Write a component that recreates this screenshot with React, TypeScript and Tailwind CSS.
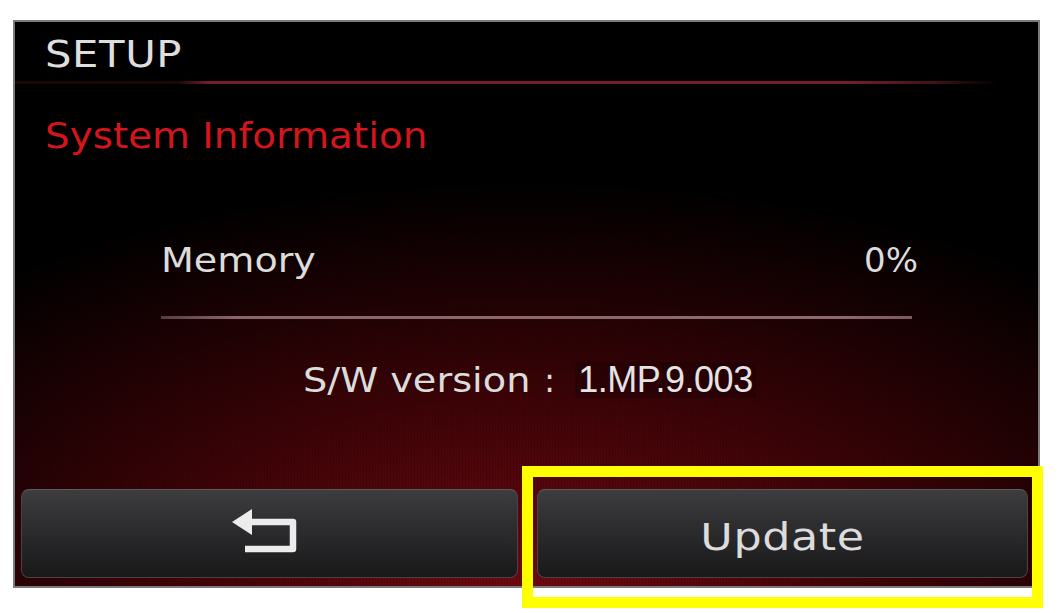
import React from "react";

const DV = { fontFamily: '"DejaVu Sans", "Noto Sans", sans-serif' };
const LS = { fontFamily: '"Liberation Sans", Arial, sans-serif' };

function BackIcon() {
  return (
    <svg width="70" height="50" viewBox="0 0 70 50" className="block">
      <polygon points="1,15 21,2 21,28" fill="#ececec" />
      <path
        d="M18 15 H62 V42 H14"
        fill="none"
        stroke="#ececec"
        strokeWidth="6.5"
        strokeLinejoin="round"
      />
    </svg>
  );
}

export default function App() {
  return (
    <div className="relative w-[1061px] h-[613px] bg-white overflow-hidden pt-[20px] pl-[13px]">
      <div
        className="w-[1027px] h-[568px] border-2 border-[#7a7a7a] flex flex-col bg-[repeating-linear-gradient(90deg,rgba(0,0,0,0.12)_0px,rgba(0,0,0,0.12)_1px,transparent_1px,transparent_3px),radial-gradient(ellipse_80%_72%_at_50%_100%,#6e0a10_0%,#3e0307_45%,#000_100%)]"
        style={DV}
      >
        {/* SETUP */}
        <div className="mt-[13px] pl-[30px] text-[38px] leading-[38px] text-[#dedede]">
          <span className="inline-block origin-left scale-x-[1.1] tracking-[0.5px]">SETUP</span>
        </div>
        {/* red rule */}
        <div className="mt-[8px] h-[3px] w-full bg-[linear-gradient(to_right,#1c0608_0%,#1c0608_16%,#74202a_19%,#74202a_81%,#401216_90%,transparent_96%)]" />
        {/* System Information */}
        <div className="mt-[34px] pl-[30px] text-[36px] leading-[36px] text-[#d4151c]">
          <span className="inline-block origin-left scale-x-[1.08]">System Information</span>
        </div>

        {/* Memory row */}
        <div className="mt-[89px] ml-[146px] w-[757px] flex justify-between items-baseline text-[#dcdcdc]">
          <span className="inline-block origin-left scale-x-[1.12] text-[34px] leading-[34px]">Memory</span>
          <span className="text-[34px] leading-[34px]">0%</span>
        </div>
        <div className="mt-[39px] ml-[146px] w-[751px] h-[3px] bg-[linear-gradient(to_right,#5a3c3f_0%,#8a6669_10%,#8e6a6d_90%,#7a5a5d_100%)]" />

        {/* S/W version */}
        <div className="mt-[43px] ml-[288px] flex items-baseline text-[#dcdcdc]">
          <span className="inline-block origin-left scale-x-[1.16] text-[33px] leading-[33px]">S/W version</span>
          <span className="ml-[45px] text-[33px] leading-[33px]">:</span>
          <span
            className="ml-[20px] px-[3px] bg-[#0a0102]/25 text-[36px] leading-[36px] text-[#e4e4e4] tracking-[-0.5px]"
            style={LS}
          >
            1.MP.9.003
          </span>
        </div>

        {/* buttons */}
        <div className="mt-auto mb-[8px] pl-[6px] flex gap-[19px]">
          <div className="w-[497px] h-[89px] rounded-[8px] border border-[#4a4345] border-t-[#5e5a5c] bg-[linear-gradient(to_bottom,#3d3d40_0%,#2a2a2c_50%,#19191a_100%)] flex items-center justify-center">
            <div className="-ml-[8px] -mt-[4px]">
              <BackIcon />
            </div>
          </div>
          <div className="w-[491px] h-[89px] rounded-[8px] border border-[#4a4345] border-t-[#5e5a5c] bg-[linear-gradient(to_bottom,#3d3d40_0%,#2a2a2c_50%,#19191a_100%)] flex items-center justify-center">
            <span className="inline-block pt-[8px] origin-center scale-x-[1.2] text-[37px] leading-[37px] tracking-[0.5px] text-[#dcdcdc]">
              Update
            </span>
          </div>
        </div>
      </div>

      {/* yellow highlight annotation */}
      <div className="absolute left-[522px] top-[466px] w-[521px] h-[142px] border-[11px] border-[#ffff00]" />
    </div>
  );
}
